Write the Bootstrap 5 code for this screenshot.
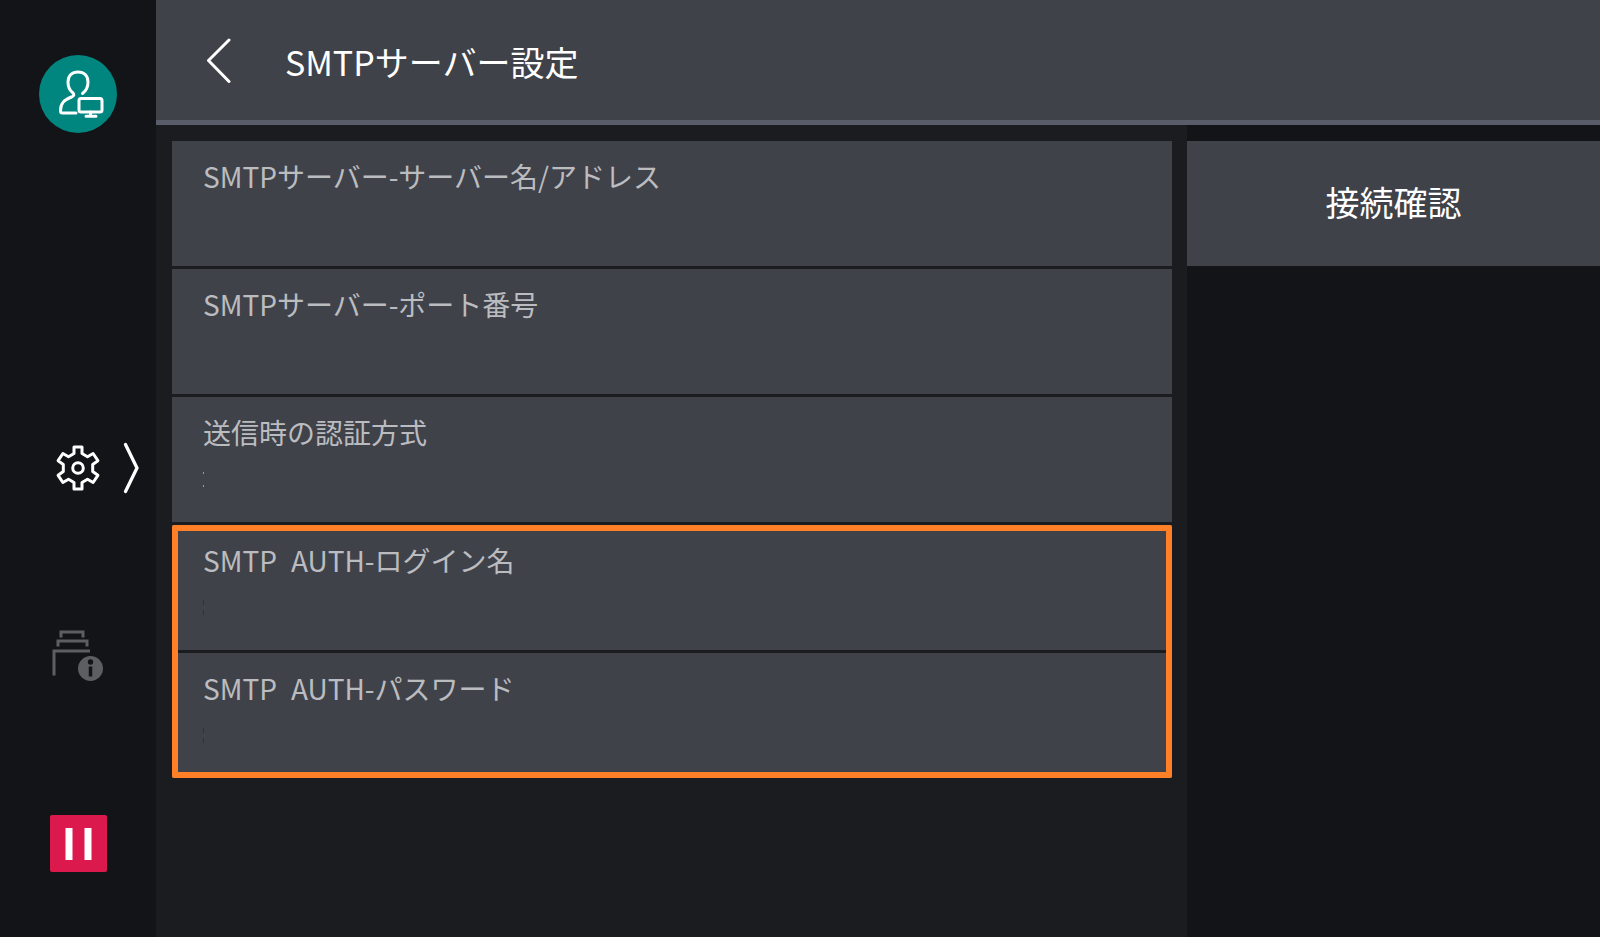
<!DOCTYPE html>
<html lang="ja">
<head>
<meta charset="utf-8">
<meta name="viewport" content="width=device-width, initial-scale=1">
<title>SMTPサーバー設定</title>
<link href="https://cdn.jsdelivr.net/npm/bootstrap@5.3.0/dist/css/bootstrap.min.css" rel="stylesheet">
<style>
  body { background: #131418; color: #fff; font-family: "Noto Sans CJK JP", sans-serif; }
  .side-rail { width: 156px; display: grid; grid-template-rows: repeat(5, 1fr); justify-items: center; align-items: center; background: #131418; }
  .rail-slot-settings { grid-row: 3; }
  .rail-slot-jobs { grid-row: 4; }
  .rail-slot-pause { grid-row: 5; }
  .rail-btn { line-height: 0; color: #fff; }
  .rail-chevron { position: absolute; left: 122px; }
  .top-bar { height: 125px; background: #404249; border-bottom: 5px solid #595c69; padding-left: 48px; gap: 51px; }
  .screen-title { font-size: 34px; line-height: 48px; padding-top: 4px; }
  .list-pane { width: 71.4%; background: #1b1c20; padding: 16px 15px 16px 16px; gap: 3px; }
  .tile { background: #404249; border: 0; height: 125px; color: #bbbcc0; font-size: 28px; line-height: 40px; }
  .setting-tile { padding: 15px 31px; gap: 20px; }
  .tile-mark { display: block; }
  .auth-group { gap: 3px; outline: 6px solid #ff8026; outline-offset: -6px; border-radius: 2px; }
  .action-pane { padding-top: 16px; }
  .action-tile { color: #fff; font-size: 34px; line-height: 48px; padding-bottom: 4px; }
</style>
</head>
<body>
<div class="d-flex min-vh-100">
  <nav class="side-rail flex-shrink-0" aria-label="メニュー">
    <button type="button" class="rail-btn btn p-0 border-0" aria-label="ユーザー">
      <svg width="78" height="78" viewBox="0 0 78 78" fill="none" stroke="#fff" stroke-width="3" stroke-linecap="round" stroke-linejoin="round">
        <circle cx="39" cy="39" r="39" fill="#00857f" stroke="none"/>
        <path d="M43.500 38.500C47 36 49 32 49 27C49 20.500 45 17 39 17S29 20.500 29 27C29 32 31 35.500 33.500 37.500C36 39.500 35 41 32.500 42C25 45 21.500 48 21.500 56Q21.500 58 23.500 58H37"/>
        <rect x="40" y="43.500" width="23" height="13.500" rx="2"/>
        <path d="M51.500 57v3.500M47 61.200h10"/>
      </svg>
    </button>
    <div class="rail-slot-settings w-100 d-flex justify-content-center align-items-center position-relative">
      <button type="button" class="rail-btn btn p-0 border-0" aria-label="設定">
        <svg width="46" height="46" viewBox="0 0 46 46" fill="none" stroke="#fff" stroke-width="3" stroke-linejoin="round">
          <path d="M19 2h8v6.500l5.500 3.200 5.600-3.200 4.800 7.200-5.200 3.800v7l5.200 3.800-4.800 7.200-5.600-3.200L27 37.500V44h-8v-6.500l-5.500-3.200-5.600 3.200-4.800-7.200 5.200-3.800v-7L3.100 15.700l4.800-7.200 5.600 3.200L19 8.500z"/>
          <circle cx="23" cy="23" r="5.300"/>
        </svg>
      </button>
      <svg class="rail-chevron" width="18" height="52" viewBox="0 0 18 52" fill="none" stroke="#fff" stroke-width="3.300" stroke-linecap="round" aria-hidden="true"><path d="M3.500 2.500L15 26L3.500 49.500"/></svg>
    </div>
    <button type="button" class="rail-slot-jobs rail-btn btn p-0 border-0" aria-label="ジョブ確認">
      <svg width="52" height="52" viewBox="0 0 52 52" fill="none" stroke="#5d5e61" stroke-width="3">
        <path d="M9 7.500V2h22v5.500M6 16.500V11h29v5.500M2 45.500V21h36"/>
        <circle cx="38.500" cy="38.500" r="12.500" fill="#5d5e61" stroke="none"/>
        <circle cx="38.500" cy="32" r="2.700" fill="#131418" stroke="none"/>
        <path d="M38.500 36.500v10" stroke="#131418" stroke-width="3.500"/>
      </svg>
    </button>
    <button type="button" class="rail-slot-pause rail-btn btn p-0 border-0" aria-label="一時停止">
      <svg width="57" height="57" viewBox="0 0 57 57"><rect width="57" height="57" rx="2" fill="#db194c"/><path d="M15.500 13h7v32h-7zM34.500 13h7v32h-7z" fill="#fff"/></svg>
    </button>
  </nav>

  <div class="flex-grow-1 d-flex flex-column">
    <header class="top-bar d-flex align-items-center">
      <button type="button" class="rail-btn btn p-0 border-0" aria-label="戻る">
        <svg width="30" height="46" viewBox="0 0 30 46" fill="none" stroke="#fff" stroke-width="3" stroke-linecap="round" stroke-linejoin="round"><path d="M25 3L4.500 23.500L25 44.500"/></svg>
      </button>
      <h1 class="screen-title fw-normal mb-0">SMTPサーバー設定</h1>
    </header>
    <div class="flex-grow-1 d-flex">
      <main class="list-pane d-flex flex-column">
        <button type="button" class="tile setting-tile d-flex flex-column text-start">SMTPサーバー-サーバー名/アドレス</button>
        <button type="button" class="tile setting-tile d-flex flex-column text-start">SMTPサーバー-ポート番号</button>
        <button type="button" class="tile setting-tile d-flex flex-column text-start">送信時の認証方式
          <svg class="tile-mark" width="1" height="20" aria-hidden="true"><path d="M0 0h1v2H0zM0 13h1v2H0z" fill="#9a9b9f"/></svg>
        </button>
        <div class="auth-group d-flex flex-column">
          <button type="button" class="tile setting-tile d-flex flex-column text-start">SMTP&ensp;AUTH-ログイン名
            <svg class="tile-mark" width="1" height="20" aria-hidden="true"><path d="M0 0h1v5H0zM0 10h1v5H0z" fill="#303238"/></svg>
          </button>
          <button type="button" class="tile setting-tile d-flex flex-column text-start">SMTP&ensp;AUTH-パスワード
            <svg class="tile-mark" width="1" height="20" aria-hidden="true"><path d="M0 0h1v5H0zM0 10h1v5H0z" fill="#303238"/></svg>
          </button>
        </div>
      </main>
      <aside class="action-pane flex-grow-1">
        <button type="button" class="tile action-tile w-100">接続確認</button>
      </aside>
    </div>
  </div>
</div>
<script src="https://cdn.jsdelivr.net/npm/bootstrap@5.3.0/dist/js/bootstrap.bundle.min.js"></script>
</body>
</html>
